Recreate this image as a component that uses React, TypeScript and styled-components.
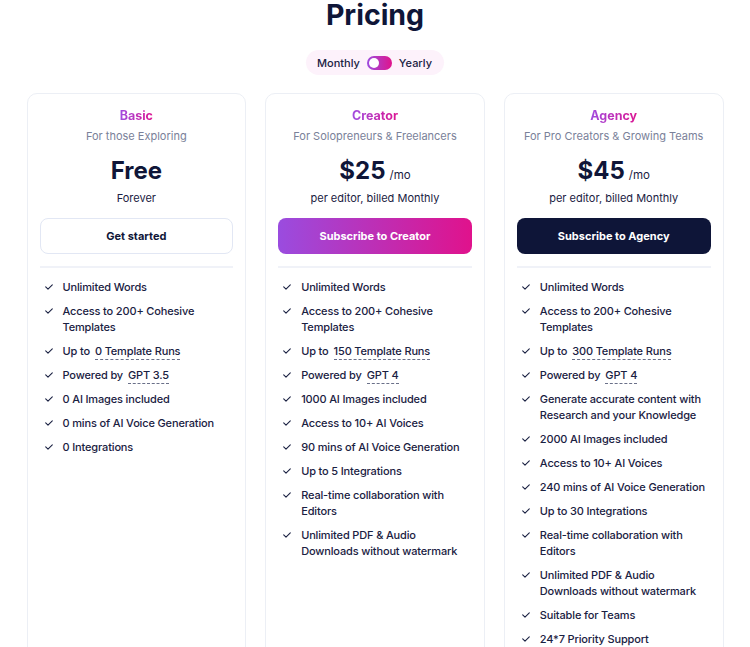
import styled, { createGlobalStyle, css } from "styled-components";

const GlobalStyle = createGlobalStyle`
  body {
    margin: 0;
    background: #ffffff;
    font-family: Inter, "Noto Sans", sans-serif;
    color: #0f1638;
  }
`;

const Page = styled.div`
  display: flex;
  flex-direction: column;
  align-items: center;
  padding-bottom: 40px;
`;

const Title = styled.h1`
  margin: 0;
  font-size: 28.5px;
  line-height: 30px;
  font-weight: 700;
  color: #0f1638;
`;

const TogglePill = styled.div`
  margin-top: 20px;
  height: 25px;
  padding: 0 12px 0 11px;
  display: flex;
  align-items: center;
  gap: 7px;
  border-radius: 999px;
  background: #fdf2fb;
  font-size: 11px;
  font-weight: 500;
  color: #1a2142;
`;

const Switch = styled.div`
  width: 25px;
  height: 14px;
  border-radius: 999px;
  background: linear-gradient(90deg, #9d4cdf, #e0148c);
  display: flex;
  align-items: center;
  padding: 0 2px;
  box-sizing: border-box;
`;

const Knob = styled.span`
  width: 10px;
  height: 10px;
  border-radius: 50%;
  background: #ffffff;
`;

const Grid = styled.div`
  margin-top: 18px;
  width: 697px;
  display: grid;
  grid-template-columns: repeat(3, 1fr);
  gap: 19px;
`;

const Card = styled.div`
  border: 1px solid #eceff5;
  border-radius: 10px;
  background: #ffffff;
  padding: 13px 12px 30px;
  min-height: 580px;
  display: flex;
  flex-direction: column;
`;

const PlanName = styled.div`
  text-align: center;
  font-size: 12.5px;
  line-height: 18px;
  font-weight: 700;
  background: linear-gradient(90deg, #a04ce0, #dc1592);
  -webkit-background-clip: text;
  background-clip: text;
  color: transparent;
  align-self: center;
`;

const Tagline = styled.div`
  margin-top: 3px;
  text-align: center;
  font-size: 11px;
  line-height: 16px;
  color: #7a8199;
`;

const PriceRow = styled.div`
  margin-top: 12px;
  display: flex;
  justify-content: center;
  align-items: baseline;
  gap: 4px;
  height: 30px;
`;

const Amount = styled.span`
  font-size: 24px;
  line-height: 30px;
  font-weight: 700;
  color: #0f1638;
`;

const Per = styled.span`
  font-size: 11.5px;
  color: #1a2142;
`;

const Billing = styled.div`
  margin-top: 4px;
  text-align: center;
  font-size: 11px;
  line-height: 16px;
  color: #1a2142;
`;

const Button = styled.button<{ $variant: "outline" | "gradient" | "dark" }>`
  margin-top: 12px;
  height: 36px;
  width: 100%;
  border-radius: 8px;
  font-family: inherit;
  font-size: 11px;
  font-weight: 700;
  cursor: pointer;
  ${({ $variant }) =>
    $variant === "outline"
      ? css`
          background: #ffffff;
          border: 1px solid #e2e7f4;
          color: #0f1638;
        `
      : $variant === "gradient"
      ? css`
          background: linear-gradient(90deg, #9a4cdf, #e0128c);
          border: none;
          color: #ffffff;
        `
      : css`
          background: #0e1538;
          border: none;
          color: #ffffff;
        `}
`;

const Divider = styled.hr`
  margin: 12px 0 0;
  border: none;
  height: 2px;
  background: #f0f2f8;
`;

const FeatureList = styled.ul`
  list-style: none;
  margin: 11px 0 0;
  padding: 0 0 0 5px;
  display: flex;
  flex-direction: column;
  gap: 8px;
`;

const Feature = styled.li`
  display: flex;
  align-items: flex-start;
  gap: 10px;
  font-size: 11px;
  line-height: 16px;
  font-weight: 500;
  letter-spacing: -0.15px;
  color: #1a2142;
`;

const CheckIcon = styled.svg`
  flex: none;
  margin-top: 5px;
  width: 8px;
  height: 6px;
`;

const Dotted = styled.span`
  margin-left: 5px;
  border-bottom: 1px dashed #6a7089;
  padding-bottom: 1px;
`;

type FeatureItem = { text: string; dotted?: string };

type Plan = {
  name: string;
  tagline: string;
  amount: string;
  per?: string;
  billing: string;
  cta: string;
  variant: "outline" | "gradient" | "dark";
  features: FeatureItem[];
};

const plans: Plan[] = [
  {
    name: "Basic",
    tagline: "For those Exploring",
    amount: "Free",
    billing: "Forever",
    cta: "Get started",
    variant: "outline",
    features: [
      { text: "Unlimited Words" },
      { text: "Access to 200+ Cohesive Templates" },
      { text: "Up to", dotted: "0 Template Runs" },
      { text: "Powered by", dotted: "GPT 3.5" },
      { text: "0 AI Images included" },
      { text: "0 mins of AI Voice Generation" },
      { text: "0 Integrations" },
    ],
  },
  {
    name: "Creator",
    tagline: "For Solopreneurs & Freelancers",
    amount: "$25",
    per: "/mo",
    billing: "per editor, billed Monthly",
    cta: "Subscribe to Creator",
    variant: "gradient",
    features: [
      { text: "Unlimited Words" },
      { text: "Access to 200+ Cohesive Templates" },
      { text: "Up to", dotted: "150 Template Runs" },
      { text: "Powered by", dotted: "GPT 4" },
      { text: "1000 AI Images included" },
      { text: "Access to 10+ AI Voices" },
      { text: "90 mins of AI Voice Generation" },
      { text: "Up to 5 Integrations" },
      { text: "Real-time collaboration with Editors" },
      { text: "Unlimited PDF & Audio Downloads without watermark" },
    ],
  },
  {
    name: "Agency",
    tagline: "For Pro Creators & Growing Teams",
    amount: "$45",
    per: "/mo",
    billing: "per editor, billed Monthly",
    cta: "Subscribe to Agency",
    variant: "dark",
    features: [
      { text: "Unlimited Words" },
      { text: "Access to 200+ Cohesive Templates" },
      { text: "Up to", dotted: "300 Template Runs" },
      { text: "Powered by", dotted: "GPT 4" },
      { text: "Generate accurate content with Research and your Knowledge" },
      { text: "2000 AI Images included" },
      { text: "Access to 10+ AI Voices" },
      { text: "240 mins of AI Voice Generation" },
      { text: "Up to 30 Integrations" },
      { text: "Real-time collaboration with Editors" },
      { text: "Unlimited PDF & Audio Downloads without watermark" },
      { text: "Suitable for Teams" },
      { text: "24*7 Priority Support" },
    ],
  },
];

function Check() {
  return (
    <CheckIcon viewBox="0 0 8 6" fill="none">
      <path
        d="M0.7 2.9 L3 5.1 L7.3 0.8"
        stroke="#1a2142"
        strokeWidth="1.1"
        strokeLinecap="round"
        strokeLinejoin="round"
      />
    </CheckIcon>
  );
}

function PlanCard({ plan }: { plan: Plan }) {
  return (
    <Card>
      <PlanName>{plan.name}</PlanName>
      <Tagline>{plan.tagline}</Tagline>
      <PriceRow>
        <Amount>{plan.amount}</Amount>
        {plan.per && <Per>{plan.per}</Per>}
      </PriceRow>
      <Billing>{plan.billing}</Billing>
      <Button $variant={plan.variant}>{plan.cta}</Button>
      <Divider />
      <FeatureList>
        {plan.features.map((f) => (
          <Feature key={f.text + (f.dotted ?? "")}>
            <Check />
            <span>
              {f.text}
              {f.dotted && <Dotted>{f.dotted}</Dotted>}
            </span>
          </Feature>
        ))}
      </FeatureList>
    </Card>
  );
}

export default function App() {
  return (
    <>
      <GlobalStyle />
      <Page>
        <Title>Pricing</Title>
        <TogglePill>
          <span>Monthly</span>
          <Switch>
            <Knob />
          </Switch>
          <span>Yearly</span>
        </TogglePill>
        <Grid>
          {plans.map((p) => (
            <PlanCard key={p.name} plan={p} />
          ))}
        </Grid>
      </Page>
    </>
  );
}
